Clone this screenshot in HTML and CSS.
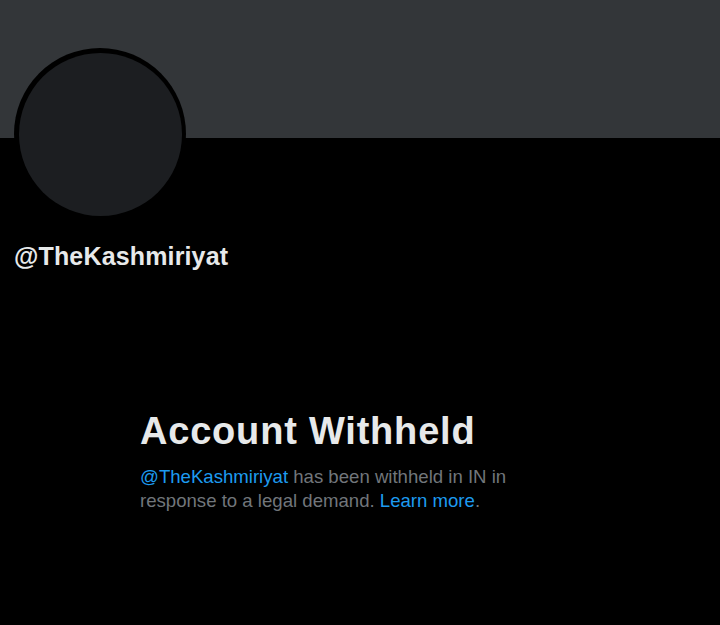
FILE: index.html
```html
<!DOCTYPE html>
<html>
<head>
<meta charset="utf-8">
<link rel="stylesheet" href="styles.css">
</head>
<body>
<div class="page">
  <div class="banner"></div>
  <div class="profile">
    <div class="avatar"><div class="avatar-inner"></div></div>
    <div class="handle">@TheKashmiriyat</div>
  </div>
  <div class="withheld">
    <h1 class="title">Account Withheld</h1>
    <p class="desc"><span class="link">@TheKashmiriyat</span> has been withheld in IN in<br>response to a legal demand. <span class="link">Learn more</span>.</p>
  </div>
</div>
</body>
</html>
```
FILE: styles.css
```css
html, body {
  margin: 0;
  padding: 0;
  background: #000;
}
.page {
  width: 720px;
  height: 625px;
  overflow: hidden;
  background: #000;
  font-family: "Liberation Sans", Arial, sans-serif;
}
.banner {
  height: 138px;
  background: #333639;
}
.profile {
  padding-left: 14px;
}
.avatar {
  width: 172px;
  height: 172px;
  margin-top: -90px;
  border-radius: 50%;
  background: #000;
  display: flex;
  align-items: center;
  justify-content: center;
}
.avatar-inner {
  width: 163px;
  height: 163px;
  border-radius: 50%;
  background: #1c1e21;
}
.handle {
  margin-top: 21px;
  color: #e7e9ea;
  font-weight: bold;
  font-size: 25px;
  line-height: 30px;
  letter-spacing: 0.15px;
}
.withheld {
  padding-left: 140px;
  margin-top: 138px;
}
.title {
  margin: 0;
  color: #e7e9ea;
  font-size: 38px;
  line-height: 44px;
  font-weight: bold;
  letter-spacing: 0.8px;
}
.desc {
  margin: 12px 0 0;
  color: #71767b;
  font-size: 18.6px;
  line-height: 24px;
}
.link {
  color: #1d9bf0;
}
```
